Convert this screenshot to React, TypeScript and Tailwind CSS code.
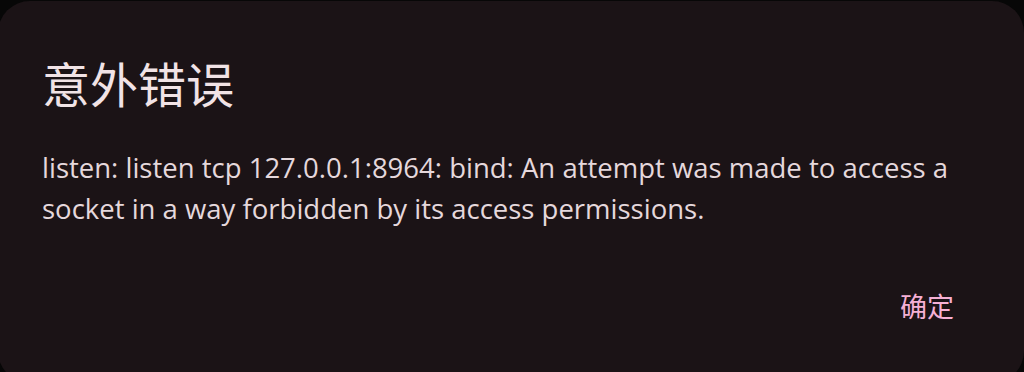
export default function App() {
  return (
    <div className="h-[372px] overflow-hidden bg-[#070707]">
      <div className="-ml-[2px] mt-px flex h-[382px] w-[1026px] flex-col rounded-[32px] bg-[#1b1316] pl-[44px] pr-[50px] pt-[49px] font-['Open_Sans','Noto_Sans_CJK_SC',sans-serif]">
        <h1 className="text-[48px] leading-[64px] text-[#f1e3e6] font-['Noto_Sans_CJK_SC',sans-serif]">
          意外错误
        </h1>
        <p className="mt-[33px] text-[27.5px] leading-[41px] text-[#e5d8dc]">
          listen: listen tcp 127.0.0.1:8964: bind: An attempt was made to access a socket in a way
          forbidden by its access permissions.
        </p>
        <div className="mt-auto mb-[59px] flex justify-end pr-[20px]">
          <button
            type="button"
            className="text-[27px] leading-[36px] text-[#f5b0d5] font-['Noto_Sans_CJK_SC',sans-serif]"
          >
            确定
          </button>
        </div>
      </div>
    </div>
  );
}
